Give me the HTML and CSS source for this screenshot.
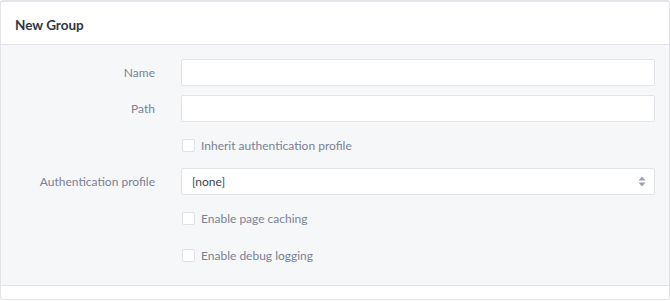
FILE: index.html
```html
<!DOCTYPE html>
<html lang="en">
  <head>
    <meta charset="UTF-8" />
    <title>New Group</title>
    <link rel="stylesheet" href="styles.css">
  </head>
  <body>
    <div class="panel">
      <div class="panel-header">New Group</div>
      <form class="panel-body">
        <div class="form-row">
          <label class="form-label" for="name">Name</label>
          <input class="form-input" id="name" type="text" />
        </div>
        <div class="form-row">
          <label class="form-label" for="path">Path</label>
          <input class="form-input" id="path" type="text" />
        </div>
        <div class="form-row check-row">
          <span class="form-label"></span>
          <label class="check"><span class="check-box"></span>Inherit authentication profile</label>
        </div>
        <div class="form-row">
          <label class="form-label" for="auth">Authentication profile</label>
          <div class="form-input select">
            <span>[none]</span>
            <svg class="select-arrows" width="8" height="11" viewBox="0 0 8 11">
              <path d="M4 0.5 L7.5 4.5 H0.5 Z" fill="#9ba0ae" />
              <path d="M4 10.5 L7.5 6.5 H0.5 Z" fill="#9ba0ae" />
            </svg>
          </div>
        </div>
        <div class="form-row check-row">
          <span class="form-label"></span>
          <label class="check"><span class="check-box"></span>Enable page caching</label>
        </div>
        <div class="form-row check-row">
          <span class="form-label"></span>
          <label class="check"><span class="check-box"></span>Enable debug logging</label>
        </div>
      </form>
      <div class="panel-footer"></div>
    </div>
  </body>
</html>
```

FILE: styles.css
```css
body {
  margin: 0;
  background-color: #ffffff;
  font-family: Lato, "Open Sans", sans-serif;
}

.panel {
  width: 668px;
  border: 1px solid #e2e4e9;
  border-top-width: 2px;
  border-radius: 3px;
  background-color: #ffffff;
}

.panel-header {
  box-sizing: border-box;
  height: 43px;
  padding: 3px 0 0 14px;
  display: flex;
  align-items: center;
  font-size: 13.5px;
  font-weight: bold;
  color: #2f3547;
  border-bottom: 1px solid #e2e4e9;
}

.panel-body {
  margin: 0;
  padding: 14px 0 16px 0;
  background-color: #f6f7f9;
  border-bottom: 1px solid #e2e4e9;
  display: flex;
  flex-direction: column;
  gap: 9px;
}

.panel-footer {
  height: 13px;
}

.form-row {
  display: flex;
  align-items: center;
  height: 27px;
}

.check-row {
  height: 28px;
}

.form-label {
  width: 154px;
  flex: 0 0 154px;
  padding-right: 26px;
  text-align: right;
  font-size: 12px;
  color: #7b8194;
}

.form-input {
  box-sizing: border-box;
  width: 474px;
  height: 27px;
  margin: 0;
  border: 1px solid #e2e4e9;
  border-radius: 2px;
  background-color: #ffffff;
  font-family: inherit;
  font-size: 12px;
  color: #3d4356;
  outline: none;
}

.select {
  display: flex;
  align-items: center;
  justify-content: space-between;
  padding: 0 8px 0 10px;
}

.select-arrows {
  display: block;
}

.check {
  display: flex;
  align-items: center;
  gap: 6px;
  font-size: 12px;
  color: #7b8194;
}

.check-box {
  box-sizing: border-box;
  width: 13px;
  height: 13px;
  margin-left: 1px;
  border: 1px solid #e0e2e7;
  border-radius: 2px;
  background-color: #ffffff;
}
```
